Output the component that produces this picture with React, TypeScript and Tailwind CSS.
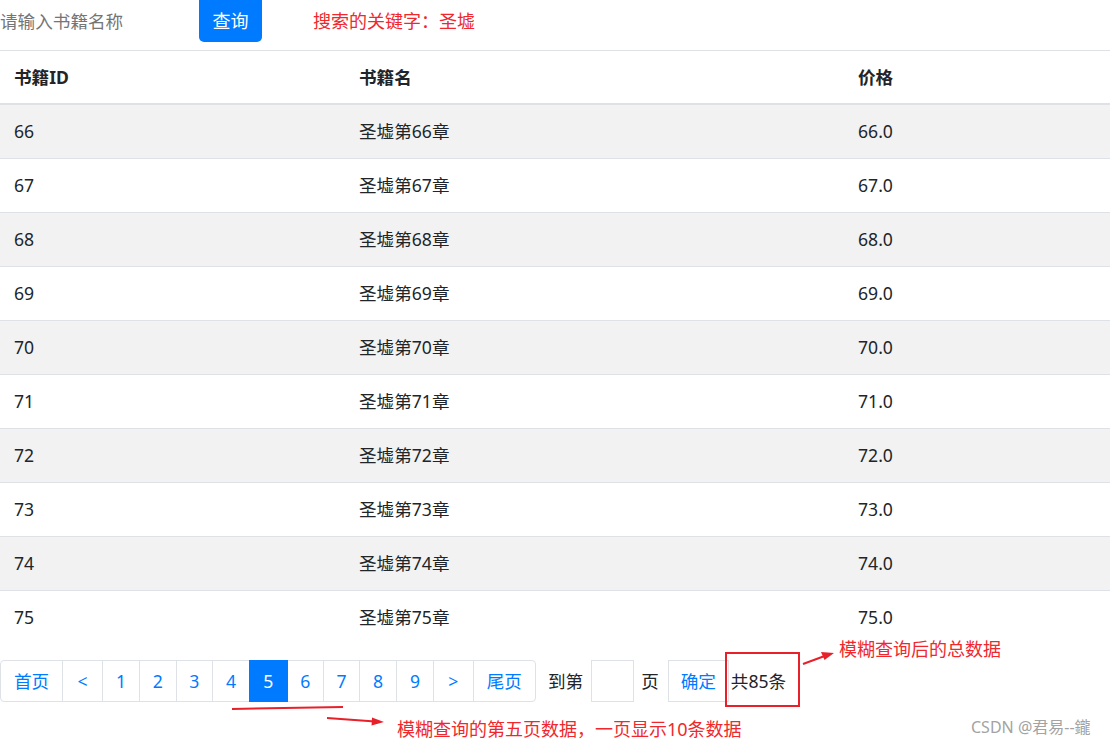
import React from "react";

const rows = [66, 67, 68, 69, 70, 71, 72, 73, 74, 75];

const pages: { label: string; w: number; active?: boolean; first?: boolean }[] = [
  { label: "首页", w: 63, first: true },
  { label: "<", w: 41 },
  { label: "1", w: 38 },
  { label: "2", w: 37.5 },
  { label: "3", w: 37.5 },
  { label: "4", w: 38 },
  { label: "5", w: 38.5, active: true },
  { label: "6", w: 37.5 },
  { label: "7", w: 37 },
  { label: "8", w: 38 },
  { label: "9", w: 38 },
  { label: ">", w: 40.5 },
  { label: "尾页", w: 63.5 },
];

export default function App() {
  return (
    <div
      className="relative w-[1110px] h-[745px] overflow-hidden bg-white text-[#212529]"
      style={{ fontFamily: '"Noto Sans", "Noto Sans CJK SC", sans-serif' }}
    >
      {/* search bar */}
      <div className="flex h-[50px] items-start text-[17.6px]">
        <div className="w-[199px] pt-[8px] leading-[26px] text-[#757575]">请输入书籍名称</div>
        <button className="h-[42px] w-[63px] rounded-b-[5px] bg-[#007bff] text-[18px] leading-[26px] text-white">查询</button>
        <div className="ml-[51px] pt-[8px] text-[18px] leading-[26px] text-[#f0282d]">搜索的关键字：圣墟</div>
      </div>

      {/* table */}
      <div className="border-t border-[#dee2e6] text-[17.6px]">
        <div className="grid h-[54px] grid-cols-[346px_499px_1fr] items-center border-b-2 border-[#dee2e6] font-bold">
          <div className="pl-[14px]">书籍ID</div>
          <div className="pl-[13px]">书籍名</div>
          <div className="pl-[13px]">价格</div>
        </div>
        {rows.map((n, i) => (
          <div
            key={n}
            className={
              "grid grid-cols-[346px_499px_1fr] items-center " +
              (i % 2 === 0 ? "bg-[#f2f2f2] " : "bg-white ") +
              (i < rows.length - 1 ? "h-[54px] border-b border-[#dee2e6]" : "h-[53px]")
            }
          >
            <div className="pl-[14px]">{n}</div>
            <div className="pl-[13px]">圣墟第{n}章</div>
            <div className="pl-[13px]">{n}.0</div>
          </div>
        ))}
      </div>

      {/* pagination */}
      <div className="mt-[16px] flex h-[42px] items-center text-[17.6px]">
        <div className="flex h-[42px]">
          {pages.map((p, i) => (
            <div
              key={i}
              style={{ width: p.w }}
              className={
                "flex h-[42px] shrink-0 items-center justify-center border " +
                (p.first ? "rounded-l-[4px] " : "-ml-px ") +
                (p.label === "尾页" ? "rounded-r-[4px] " : "") +
                (p.active
                  ? "relative z-10 border-[#007bff] bg-[#007bff] text-white"
                  : "border-[#dee2e6] bg-white text-[#007bff]")
              }
            >
              {p.label}
            </div>
          ))}
        </div>
        <div className="ml-[12px]">到第</div>
        <div className="ml-[8px] h-[42px] w-[43px] border border-[#dee2e6]" />
        <div className="ml-[7px]">页</div>
        <div className="ml-[9px] flex h-[42px] w-[61px] items-center justify-center border border-[#dee2e6] text-[#007bff]">
          确定
        </div>
        <div className="ml-[2px]">共85条</div>
      </div>

      {/* annotations */}
      <div className="absolute left-[725px] top-[652px] h-[55px] w-[75px] border-2 border-[#e8202a]" />
      <svg className="pointer-events-none absolute left-0 top-0" width="1110" height="745">
        <line x1="232" y1="709" x2="343" y2="707" stroke="#e8202a" strokeWidth="2" />
        <line x1="327" y1="718" x2="375" y2="721.5" stroke="#e8202a" strokeWidth="2" />
        <polygon points="384,722 372,717.5 371.5,725.5" fill="#e8202a" />
        <line x1="803" y1="664" x2="826" y2="655.5" stroke="#e8202a" strokeWidth="2" />
        <polygon points="834,653 821,652 824.5,660" fill="#e8202a" />
      </svg>
      <div className="absolute left-[839px] top-[636px] text-[18px] leading-[26px] text-[#f0282d]">
        模糊查询后的总数据
      </div>
      <div className="absolute left-[397px] top-[716px] text-[18px] leading-[26px] text-[#f0282d]">
        模糊查询的第五页数据，一页显示10条数据
      </div>
      <div className="absolute left-[971px] top-[716px] text-[16px] leading-[22px] text-[#a3a3a3]">
        CSDN @君易--鑨
      </div>
    </div>
  );
}
